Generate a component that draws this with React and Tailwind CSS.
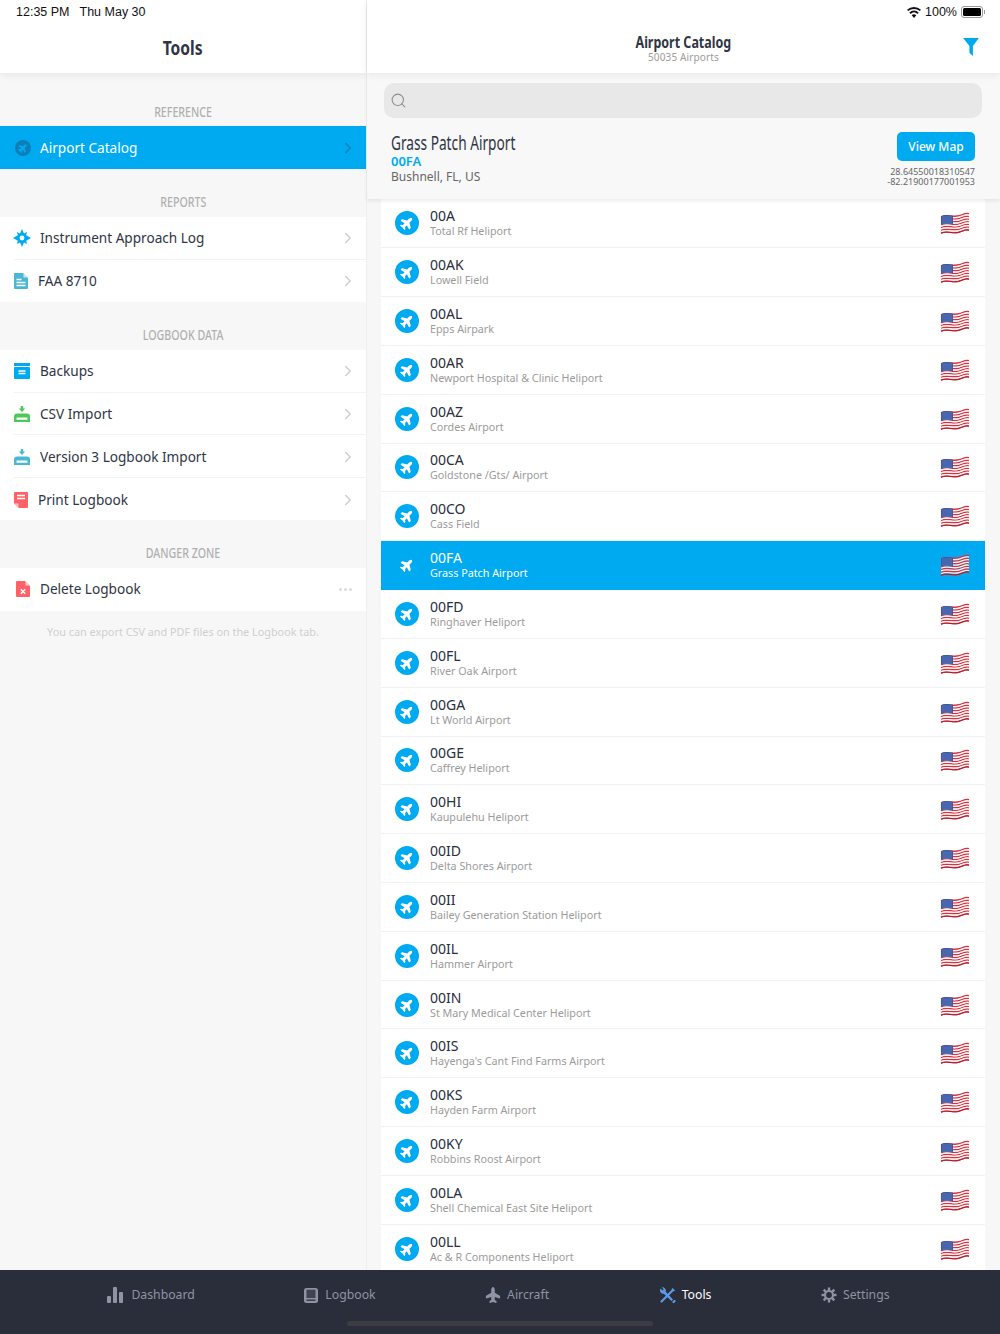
import { FaPlane } from "react-icons/fa";
import { ChevronRight, Search } from "lucide-react";

const airports = [
  ["00A", "Total Rf Heliport"],
  ["00AK", "Lowell Field"],
  ["00AL", "Epps Airpark"],
  ["00AR", "Newport Hospital & Clinic Heliport"],
  ["00AZ", "Cordes Airport"],
  ["00CA", "Goldstone /Gts/ Airport"],
  ["00CO", "Cass Field"],
  ["00FA", "Grass Patch Airport"],
  ["00FD", "Ringhaver Heliport"],
  ["00FL", "River Oak Airport"],
  ["00GA", "Lt World Airport"],
  ["00GE", "Caffrey Heliport"],
  ["00HI", "Kaupulehu Heliport"],
  ["00ID", "Delta Shores Airport"],
  ["00II", "Bailey Generation Station Heliport"],
  ["00IL", "Hammer Airport"],
  ["00IN", "St Mary Medical Center Heliport"],
  ["00IS", "Hayenga's Cant Find Farms Airport"],
  ["00KS", "Hayden Farm Airport"],
  ["00KY", "Robbins Roost Airport"],
  ["00LA", "Shell Chemical East Site Heliport"],
  ["00LL", "Ac & R Components Heliport"],
];

const wave = (y) => `M1 ${y + 2}C7 ${y - 1} 13 ${y + 3} 19 ${y + 1}S26 ${y - 2} 29 ${y - 1}`;
const redStripes = [2.8, 5.5, 8.2, 10.9, 13.6, 16.3, 19];
const whiteStripes = [4.15, 6.85, 9.55, 12.25, 14.95, 17.65];

function Flag() {
  return (
    <svg width="30" height="22" viewBox="0 0 30 22" className="shrink-0">
      {redStripes.map((y) => (
        <path key={y} d={wave(y)} fill="none" stroke="#d9323f" strokeWidth="1.500" />
      ))}
      {whiteStripes.map((y) => (
        <path key={y} d={wave(y)} fill="none" stroke="#f4f4f4" strokeWidth="1.300" />
      ))}
      <path d={wave(19.3)} fill="none" stroke="#a81c2a" strokeWidth=".9" />
      <path d="M1 4.300C4.500 2.500 8 2.800 13 3.700v8.900c-4.500-1-8-1.400-12 .2z" fill="#3a5aa6" />
      <path d="M2.500 5h9M2.500 7h9M2.500 9h9M2.500 11h9" stroke="#93a9d8" strokeWidth=".7" strokeDasharray="1 1" />
    </svg>
  );
}

function AirportRow({ code, name, active }) {
  return (
    <div className={`flex h-[48.83px] items-center border-b pl-[14px] pr-[15px] ${active ? "border-[#00aaf0] bg-[#00aaf0]" : "border-[#f1f1f1] bg-white"}`}>
      <div className={`flex h-[24px] w-[24px] shrink-0 items-center justify-center rounded-full ${active ? "" : "bg-[#00aaf0]"}`}>
        <FaPlane className="-rotate-45 text-white" size={14} />
      </div>
      <div className="ml-[11px] flex-1 pt-[1px]">
        <div className={`text-[14px] leading-[15px] ${active ? "text-white" : "text-[#2a2d3a]"}`}>{code}</div>
        <div className={`pt-[1px] text-[10.75px] leading-[15px] ${active ? "text-white" : "text-[#9b9b9b]"}`}>{name}</div>
      </div>
      <Flag />
    </div>
  );
}

function SectionLabel({ children, className = "" }) {
  return (
    <div className={`flex items-center justify-center font-medium text-[#b0b0b0] ${className}`}>
      <span className="inline-block scale-x-[.76] text-[14px]">{children}</span>
    </div>
  );
}

function MenuRow({ icon, label, tight, divider, dots, nudge }) {
  return (
    <div className="flex h-[42.5px] items-center bg-white pl-[14px]">
      <div className={`flex h-full flex-1 items-center ${divider ? "border-b border-[#f3f3f3]" : ""} ${nudge ? "pt-[2px]" : ""}`}>
        <div className={`flex shrink-0 items-center ${tight ? "w-[24px]" : "w-[26px]"}`}>{icon}</div>
        <span className="flex-1 text-[13.6px] text-[#2f3545]">{label}</span>
        {dots ? (
          <span className="mr-[14px] flex gap-[2px]">
            <i className="h-[3px] w-[3px] rounded-full bg-[#dcdcdc]" />
            <i className="h-[3px] w-[3px] rounded-full bg-[#dcdcdc]" />
            <i className="h-[3px] w-[3px] rounded-full bg-[#dcdcdc]" />
          </span>
        ) : (
          <ChevronRight className="mr-[9px] text-[#cfcfcf]" size={18} strokeWidth={2} />
        )}
      </div>
    </div>
  );
}

function StarIcon() {
  return (
    <svg width="18" height="18" viewBox="0 0 18 18" className="-ml-[1px]">
      <path d="M9 0l2 4.500 3-1.500-.8 3.200L18 9l-4.800 2.800.8 3.200-3-1.500L9 18l-2-4.500-3 1.500.8-3.200L0 9l4.800-2.800L4 3l3 1.500z" fill="#00aaf0" />
      <circle cx="9" cy="9" r="2.400" fill="#fff" />
    </svg>
  );
}

function DocIcon() {
  return (
    <svg width="14" height="16" viewBox="0 0 14 16">
      <path d="M0 1a1 1 0 011-1h8l5 5v10a1 1 0 01-1 1H1a1 1 0 01-1-1z" fill="#4ab8d4" />
      <path d="M9.500 0L14 4.500H9.500z" fill="#c5eaf3" />
      <path d="M2.500 6.500h5M2.500 9.500h9M2.500 12.500h9" stroke="#fff" strokeWidth="1.400" />
    </svg>
  );
}

function BoxIcon() {
  return (
    <svg width="16" height="16" viewBox="0 0 16 16">
      <rect width="16" height="3" fill="#00aaf0" />
      <rect y="4" width="16" height="12" rx="1" fill="#00aaf0" />
      <path d="M4.500 8h7M4.500 10.500h7" stroke="#fff" strokeWidth="1.300" />
    </svg>
  );
}

function ImportIcon({ color }) {
  return (
    <svg width="16" height="16" viewBox="0 0 16 16">
      <path d="M6.800 0h2.400v2.500h2L8 6 4.800 2.500h2z" fill={color} />
      <path d="M3 7.500h10a3 3 0 013 3V16H0v-5.500a3 3 0 013-3z" fill={color} />
      <rect x="2.500" y="11.500" width="11" height="2.200" rx=".5" fill="#fff" />
    </svg>
  );
}

function PrintIcon() {
  return (
    <svg width="14" height="16" viewBox="0 0 14 16">
      <path d="M1 0h12a1 1 0 011 1v14a1 1 0 01-1 1H5l-5-5V1a1 1 0 011-1z" fill="#ff6166" />
      <path d="M3 3.500h8M3 6.500h8" stroke="#fff" strokeWidth="1.400" />
      <path d="M1 11.500h3.500V15z" fill="#ffc5c7" />
    </svg>
  );
}

function DeleteIcon() {
  return (
    <svg width="14" height="16" viewBox="0 0 14 16" className="ml-[2px]">
      <path d="M1 0h8l5 5v10a1 1 0 01-1 1H1a1 1 0 01-1-1V1a1 1 0 011-1z" fill="#ff6166" />
      <path d="M9.500 0L14 4.500H9.500z" fill="#ffd0d2" />
      <path d="M4.800 8.300l4.400 4.400M9.200 8.300l-4.400 4.400" stroke="#fff" strokeWidth="1.600" />
    </svg>
  );
}

function GearIcon() {
  const angles = [0, 45, 90, 135, 180, 225, 270, 315];
  return (
    <svg width="16" height="16" viewBox="0 0 16 16" fill="none" stroke="#8f94a5">
      <circle cx="8" cy="8" r="4" strokeWidth="2.200" />
      {angles.map((a) => (
        <path key={a} d="M8 3.500V.500" strokeWidth="2.400" transform={`rotate(${a} 8 8)`} />
      ))}
    </svg>
  );
}

function TabItem({ icon, label, active, iconWidth }) {
  return (
    <div className="flex items-center">
      <div className={`flex shrink-0 items-center ${iconWidth}`}>{icon}</div>
      <span className={`pt-[1px] text-[12.25px] ${active ? "text-white" : "text-[#8f94a5]"}`}>{label}</span>
    </div>
  );
}

export default function App() {
  return (
    <div className="flex h-[1334px] w-[1000px] flex-col overflow-hidden bg-white font-['Noto_Sans',sans-serif]">
      <div className="flex min-h-0 flex-1">
        {/* TOOLS PANE */}
        <div className="flex w-[367px] shrink-0 flex-col border-r border-[#efefef] bg-[#f7f7f7]">
          <div className="h-[73px] bg-white shadow-[0_2px_8px_rgba(0,0,0,0.07)]">
            <div className="flex h-[24px] items-center gap-[10px] pl-[16px] font-['Liberation_Sans',sans-serif] text-[12.5px] text-[#111]">
              <span>12:35 PM</span>
              <span>Thu May 30</span>
            </div>
            <div className="flex h-[49px] items-center justify-center pb-[1px] text-[#2f3545]">
              <span className="inline-block scale-x-[.78] text-[20px] font-bold">Tools</span>
            </div>
          </div>

          <SectionLabel className="h-[53px] pt-[24px]">REFERENCE</SectionLabel>
          <div className="flex h-[43px] items-center bg-[#00aaf0] pl-[15px]">
            <div className="flex h-[16px] w-[16px] items-center justify-center rounded-full bg-[#0d7fb8]">
              <FaPlane className="-rotate-45 text-[#00aaf0]" size={10} />
            </div>
            <span className="ml-[9px] flex-1 pt-[2px] text-[13.6px] text-white">Airport Catalog</span>
            <ChevronRight className="mr-[9px] text-[#0d7fb8]" size={18} strokeWidth={2} />
          </div>

          <SectionLabel className="h-[48px] pt-[17px]">REPORTS</SectionLabel>
          <MenuRow icon={<StarIcon />} label="Instrument Approach Log" divider />
          <MenuRow icon={<DocIcon />} label="FAA 8710" tight />

          <SectionLabel className="h-[48px] pt-[17px]">LOGBOOK DATA</SectionLabel>
          <MenuRow icon={<BoxIcon />} label="Backups" divider />
          <MenuRow icon={<ImportIcon color="#4cc95a" />} label="CSV Import" divider nudge />
          <MenuRow icon={<ImportIcon color="#4ab8d4" />} label="Version 3 Logbook Import" divider nudge />
          <MenuRow icon={<PrintIcon />} label="Print Logbook" tight nudge />

          <SectionLabel className="h-[48px] pt-[17px]">DANGER ZONE</SectionLabel>
          <MenuRow icon={<DeleteIcon />} label="Delete Logbook" dots />
          <div className="pt-[13px] text-center text-[10.85px] text-[#cfcfcf]">You can export CSV and PDF files on the Logbook tab.</div>
        </div>

        {/* CATALOG PANE */}
        <div className="flex min-w-0 flex-1 flex-col bg-[#f7f7f7]">
          <div className="relative z-10 h-[73px] bg-white shadow-[0_2px_8px_rgba(0,0,0,0.07)]">
            <div className="flex h-[24px] items-center justify-end gap-[4px] pr-[15px] font-['Liberation_Sans',sans-serif] text-[12.5px] text-[#111]">
              <svg width="14" height="11" viewBox="0 0 14 11">
                <path d="M7 11L4.700 8.200a3.500 3.500 0 014.600 0zM3.600 6.900L2.300 5.400a7 7 0 019.400 0l-1.300 1.500a5 5 0 00-6.800 0zM1.200 4.100L0 2.700a10.500 10.500 0 0114 0l-1.200 1.400a8.700 8.700 0 00-11.600 0z" fill="#111" />
              </svg>
              <span>100%</span>
              <span className="flex items-center">
                <span className="flex h-[12px] w-[22px] items-center rounded-[3px] border border-[#999] p-[1px]">
                  <span className="h-full w-full rounded-[1.500px] bg-black" />
                </span>
                <span className="ml-[1px] h-[4px] w-[1px] bg-[#999]" />
              </span>
            </div>
            <div className="grid h-[49px] grid-cols-[1fr_auto_1fr] items-center">
              <div />
              <div className="flex flex-col items-center pb-[3px]">
                <span className="inline-block scale-x-[.78] text-[16px] leading-[20px] font-bold text-[#2f3545]">Airport Catalog</span>
                <span className="text-[10px] leading-[11px] tracking-[.15px] text-[#9b9b9b]">50035 Airports</span>
              </div>
              <div className="flex justify-end pr-[21px] pb-[3px]">
                <svg width="16" height="18" viewBox="0 0 14 16">
                  <path d="M0 0h14L8.700 7v9L5.600 13V7z" fill="#00aaf0" />
                </svg>
              </div>
            </div>
          </div>

          <div className="relative z-[5] h-[126px] shrink-0 bg-[#f8f8f8] pt-[10px] pr-[18px] pl-[17px] shadow-[0_2px_4px_rgba(0,0,0,0.08)]">
            <div className="flex h-[35px] items-center rounded-[10px] bg-[#e8e8e8] pl-[6px]">
              <Search className="text-[#8e8e8e]" size={17} strokeWidth={1.500} />
            </div>
            <div className="flex justify-between pt-[14px] pr-[7px] pl-[7px]">
              <div>
                <div className="h-[21px] leading-[23px] text-[#2f3545]">
                  <span className="inline-block origin-left scale-x-[.72] text-[19px]">Grass Patch Airport</span>
                </div>
                <div className="text-[13px] leading-[16px] font-semibold text-[#00aaf0]">00FA</div>
                <div className="pt-[1px] text-[12px] leading-[14px] text-[#666]">Bushnell, FL, US</div>
              </div>
              <div className="flex flex-col items-end">
                <div className="flex h-[29px] w-[78px] items-center justify-center rounded-[5px] bg-[#00aaf0] text-[12px] font-medium text-white">View Map</div>
                <div className="mt-[6px] text-right text-[9px] leading-[10px] text-[#666]">
                  28.64550018310547
                  <br />
                  -82.21900177001953
                </div>
              </div>
            </div>
          </div>

          <div className="mr-[15px] ml-[14px] min-h-0 flex-1 overflow-hidden pt-[0.4px]">
            {airports.map(([code, name]) => (
              <AirportRow key={code} code={code} name={name} active={code === "00FA"} />
            ))}
          </div>
        </div>
      </div>

      {/* TAB BAR */}
      <div className="relative z-20 h-[64px] shrink-0 bg-[#2a2d3a]">
        <div className="flex h-[50px] items-center justify-center gap-[109.5px] pr-[3px]">
          <TabItem
            label="Dashboard"
            iconWidth="w-[24px]"
            icon={
              <svg width="16" height="16" viewBox="0 0 16 16" fill="#8f94a5">
                <rect y="9" width="4" height="7" rx="1" />
                <rect x="6" width="4" height="16" rx="1" />
                <rect x="12" y="5" width="4" height="11" rx="1" />
              </svg>
            }
          />
          <TabItem
            label="Logbook"
            iconWidth="w-[21px]"
            icon={
              <svg width="14" height="15" viewBox="0 0 14 15">
                <rect width="14" height="15" rx="2.500" fill="#8f94a5" />
                <rect x="2.500" y="1.700" width="9" height="8.300" fill="#3f4352" />
                <rect x="2.500" y="11.500" width="9" height="1.300" fill="#2a2d3a" />
              </svg>
            }
          />
          <TabItem label="Aircraft" iconWidth="w-[22px]" icon={<FaPlane className="-rotate-90 text-[#8f94a5]" size={16} />} />
          <TabItem
            active
            label="Tools"
            iconWidth="w-[23px]"
            icon={
              <svg width="17" height="17" viewBox="0 0 17 17" fill="none" stroke="#5b9be6">
                <path d="M1.500 1.500l2 2 1.200-1.200-2-2a3.500 3.500 0 014 4.500L14 12.500l-1.500 1.500-7.700-7.200a3.500 3.500 0 01-3.300-5.300z" fill="#5b9be6" stroke="none" />
                <path d="M14.500 15l1-1" strokeWidth="2.200" strokeLinecap="round" />
                <path d="M13.500 3.500L2.500 14.500" strokeWidth="2.200" strokeLinecap="round" />
                <path d="M13 1.500l2.500 2.500" strokeWidth="1.600" />
              </svg>
            }
          />
          <TabItem label="Settings" iconWidth="w-[22px]" icon={<GearIcon />} />
        </div>
        <div className="mx-auto mt-[1px] h-[5px] w-[306px] rounded-full bg-[#3c3d42]" />
      </div>
    </div>
  );
}
